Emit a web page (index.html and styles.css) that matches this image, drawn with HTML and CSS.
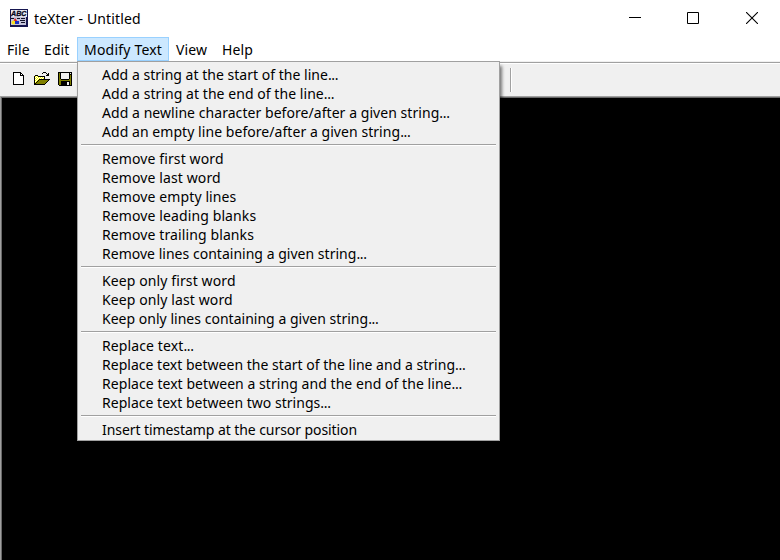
FILE: index.html
```html
<!DOCTYPE html>
<html lang="en">
<head>
<meta charset="utf-8">
<title>teXter - Untitled</title>
<link rel="stylesheet" href="styles.css">
</head>
<body>
<div class="window">
  <header class="titlebar">
    <svg class="app-icon" width="18" height="18" viewBox="0 0 18 18">
      <path fill="#161650" d="M0 0h18v18H0z"/>
      <path fill="#e8e8f2" d="M1 1h16v7H1z"/>
      <path fill="#c4c4da" d="M1 8h15v8H1z"/>
      <text class="abc" x="1" y="7" textLength="15.500" lengthAdjust="spacingAndGlyphs">ABC</text>
      <path fill="#111128" d="M1 9h3v1H1zM7 9h3v1H7zM11 9h4v1h-4zM10 11h5v1h-5zM11 13h4v1h-4z"/>
      <path fill="#e32020" d="M5 9l3 4H3z"/>
      <circle fill="#f5df20" cx="3.500" cy="13.500" r="2"/>
      <path fill="#1830c8" d="M5 12h4v3H5z"/>
    </svg>
    <span class="title">teXter - Untitled</span>
    <div class="controls">
      <svg class="minimize" width="12" height="12" viewBox="0 0 12 12"><path d="M0 5h12v1H0z" shape-rendering="crispEdges"/></svg>
      <svg width="12" height="12" viewBox="0 0 12 12"><path fill="none" stroke="#000" d="M.5 .5h11v11H.5z"/></svg>
      <svg width="12" height="12" viewBox="0 0 12 12"><path fill="none" stroke="#000" stroke-width="1.1" d="M0 0l12 12M12 0L0 12"/></svg>
    </div>
  </header>
  <nav class="menubar">
    <span class="file">File</span><span class="edit">Edit</span><span class="modify active">Modify Text</span><span class="view">View</span><span class="help">Help</span>
  </nav>
  <div class="toolbar">
    <svg class="new" width="11" height="13" viewBox="0 0 11 13" shape-rendering="crispEdges">
      <path d="M0 0h8v1h1v1h1v1h1v10H0z"/><path fill="#fff" d="M1 1h6v3h3v8H1zM8 2h1v1H8z"/>
    </svg>
    <svg class="open" width="16" height="13" viewBox="0 0 16 13" shape-rendering="crispEdges">
      <path d="M9 0h3v1H9zM8 1h1v1H8zM12 1h1v1h-1zM14 1h1v3h-3V3h1V2h1zM1 3h3v1H1zM0 4h1v8H0zM4 4h7v3h5v1h-1v1h-1v1h-1v1h-1v1h-1v1H0v-1h1v-1h1v-1h1V9h1V8h1V7h5V5H4z"/>
      <path fill="#ff0" d="M1 4h3v1h6v2H5v1H4v1H3v1H2v1H1z"/>
      <path fill="#fff" d="M2 4h1v1H2zM1 5h1v1H1zM3 5h1v1H3zM5 5h1v1H5zM7 5h1v1H7zM9 5h1v1H9zM2 6h1v1H2zM4 6h1v1H4zM6 6h1v1H6zM8 6h1v1H8zM1 7h1v1H1zM3 7h1v1H3zM2 8h1v1H2zM1 9h1v1H1z"/>
      <path fill="#808000" d="M5 8h9v1h-1v1h-1v1h-1v1H2v-1h1v-1h1V9h1z"/>
    </svg>
    <svg class="save" width="14" height="14" viewBox="0 0 14 14" shape-rendering="crispEdges">
      <path d="M0 0h14v14H1v-1H0z"/>
      <path fill="#808000" d="M1 1h1v6h1v1h8V7h1V3h1v10h-1V9H3v4H1z"/>
      <path fill="#f0f0f0" d="M3 1h8v6H3zM12 1h1v1h-1zM9 10h2v3H9z"/>
    </svg>
    <i class="divider"></i>
  </div>
  <main class="editor"></main>
  <div class="menu">
    <div class="group">
      <p>Add a string at the start of the line<span class="dots">...</span></p>
      <p class="loose">Add a string at the end of the line<span class="dots">...</span></p>
      <p class="loose">Add a newline character before/after a given string<span class="dots">...</span></p>
      <p class="loose">Add an empty line before/after a given string<span class="dots">...</span></p>
    </div>
    <div class="group">
      <p class="looser">Remove first word</p>
      <p class="looser">Remove last word</p>
      <p class="looser">Remove empty lines</p>
      <p class="looser">Remove leading blanks</p>
      <p class="looser">Remove trailing blanks</p>
      <p>Remove lines containing a given string<span class="dots">...</span></p>
    </div>
    <div class="group">
      <p class="looser">Keep only first word</p>
      <p class="looser">Keep only last word</p>
      <p>Keep only lines containing a given string<span class="dots">...</span></p>
    </div>
    <div class="group">
      <p class="looser">Replace text<span class="dots">...</span></p>
      <p>Replace text between the start of the line and a string<span class="dots">...</span></p>
      <p class="loose">Replace text between a string and the end of the line<span class="dots">...</span></p>
      <p>Replace text between two strings<span class="dots">...</span></p>
    </div>
    <div class="group">
      <p class="tight">Insert timestamp at the cursor position</p>
    </div>
  </div>
</div>
</body>
</html>
```
FILE: styles.css
```css
* { box-sizing: border-box; margin: 0; padding: 0; }
body {
  width: 780px; height: 560px; overflow: hidden; background: #fff; color: #000;
  font: 14px/19px "Noto Sans", "Open Sans", sans-serif;
}
.window { position: relative; height: 560px; display: flex; flex-direction: column; }
.titlebar { height: 37px; display: flex; align-items: center; padding: 0 22px 1px 10px; }
.abc { font: italic bold 8px "Liberation Sans", sans-serif; fill: #08081c; stroke: #08081c; stroke-width: .3px; }
.title { margin-left: 6px; letter-spacing: .14px; }
.controls { margin-left: auto; display: flex; gap: 47px; }
.controls svg { display: block; }
.controls .minimize { margin-right: -1px; }
.menubar { height: 24px; display: flex; letter-spacing: .1px; }
.menubar span { height: 24px; line-height: 25px; white-space: nowrap; }
.file { width: 37px; padding-left: 7px; }
.edit { width: 40px; padding-left: 7px; }
.modify { width: 92px; padding-left: 6px; letter-spacing: .2px; }
.view { width: 46px; padding-left: 7px; }
.help { padding-left: 7px; }
.active { background: #cce8ff; border: 1px solid #99d1ff; line-height: 23px !important; }
.toolbar {
  height: 35px; background: #f0f0f0; display: flex; align-items: flex-start;
  border-top: 1px solid #f0f0f0; box-shadow: inset 0 1px #a0a0a0, inset 0 2px #fff;
  padding: 10px 0 0 13px;
}
.open { margin-left: 10px; }
.save { margin-left: 8px; }
.divider { width: 2px; height: 24px; margin: -4px 0 0 438px; background: #a0a0a0; border-right: 1px solid #fff; }
.editor { flex: 1; background: #000; border: solid #a0a0a0; border-width: 1px 0 0 1px; box-shadow: inset 1px 1px #696969; }
.menu {
  position: absolute; left: 77px; top: 61px; width: 423px; height: 380px;
  background: #f0f0f0; border: 1px solid #a0a0a0; padding: 3px 3px 0;
  box-shadow: 2px 5px 3px rgba(0,0,0,.5);
}
.group + .group { margin-top: 3px; border-top: 1px solid #a0a0a0; box-shadow: inset 0 1px #fff; padding-top: 4px; }
.group p { height: 19px; padding-left: 21px; white-space: nowrap; letter-spacing: .02px; }
.group .loose { letter-spacing: .055px; }
.group .looser { letter-spacing: .11px; }
.group .tight { letter-spacing: -.07px; }
.group .dots { letter-spacing: -.3px; }
```
